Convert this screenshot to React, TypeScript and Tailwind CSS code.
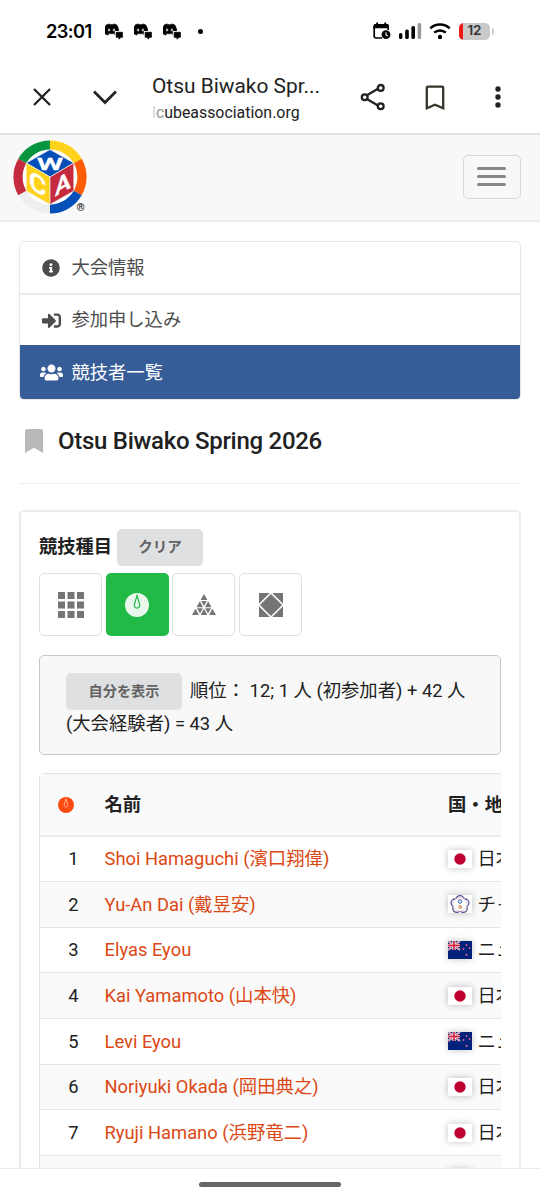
import React from "react";
import { FaBookmark, FaDiscord, FaInfoCircle, FaSignInAlt, FaUsers } from "react-icons/fa";

type FlagCode = "jp" | "tw" | "nz";

interface Competitor {
    rank: number;
    name: string;
    flag: FlagCode;
    country: string;
}

const competitors: Competitor[] = [
    { rank: 1, name: "Shoi Hamaguchi (濱口翔偉)", flag: "jp", country: "日本" },
    { rank: 2, name: "Yu-An Dai (戴昱安)", flag: "tw", country: "チャイニーズタイペイ" },
    { rank: 3, name: "Elyas Eyou", flag: "nz", country: "ニュージーランド" },
    { rank: 4, name: "Kai Yamamoto (山本快)", flag: "jp", country: "日本" },
    { rank: 5, name: "Levi Eyou", flag: "nz", country: "ニュージーランド" },
    { rank: 6, name: "Noriyuki Okada (岡田典之)", flag: "jp", country: "日本" },
    { rank: 7, name: "Ryuji Hamano (浜野竜二)", flag: "jp", country: "日本" },
    { rank: 8, name: "", flag: "jp", country: "" },
];

// ==========================================
// STATUS BAR
// ==========================================
function DiscordNotification() {
    return (
        <svg width="19" height="17" viewBox="0 0 19 17">
            <FaDiscord x="-1.5" y="-1.5" width="20" height="18" stroke="#000" strokeWidth="24" />
            <path d="M9.8 8h9.2v9H9.8z" fill="#fff" />
            <path d="M11.2 9.3h6.2v5h-1.6L14 16.2v-1.9h-2.8z" fill="#000" stroke="#000" strokeWidth="0.8" strokeLinejoin="round" />
        </svg>
    );
}

function StatusBar() {
    return (
        <div className="flex h-[62px] shrink-0 items-center pl-[46px] pr-[46.5px] text-black">
            <span className="w-[59px] font-['Inter'] text-[18.3px] font-semibold leading-none tracking-[-0.6px]">23:01</span>
            <div className="flex gap-[10px]">
                <DiscordNotification />
                <DiscordNotification />
                <DiscordNotification />
            </div>
            <div className="ml-[16px] size-[5px] rounded-full bg-black" />
            <div className="ml-auto flex items-center">
                <svg width="18" height="18" viewBox="0 0 18 18">
                    <path d="M9 16H3a1.8 1.8 0 0 1-1.8-1.8V4.2" fill="none" stroke="#000" strokeWidth="1.7" />
                    <path d="M15.2 4v4" stroke="#000" strokeWidth="1.7" />
                    <path d="M.4 6.3V3.5Q.4 2 2 2h1.2V.6h1.9V2h6.2V.6h1.9V2h1.2Q16 2 16 3.5v2.8z" />
                    <circle cx="13" cy="12.7" r="4.4" />
                    <path d="M13 10.3v2.6l1.8 1.1" fill="none" stroke="#fff" strokeWidth="1.1" />
                </svg>
                <svg className="ml-[7px]" width="24" height="18" viewBox="0 0 24 18">
                    <rect x="1" y="11" width="3.4" height="6" rx="1.6" />
                    <rect x="7.2" y="7.5" width="3.6" height="9.5" rx="1.6" />
                    <rect x="13.4" y="4" width="3.6" height="13" rx="1.6" />
                    <rect x="19.6" y="1" width="3.6" height="16" rx="1.6" fill="#999" />
                </svg>
                <svg className="ml-[7px]" width="22" height="18" viewBox="0 0 22 18">
                    <path d="M1.3 6.3a14.3 14.3 0 0 1 19.4 0M5.2 10.7a8.6 8.6 0 0 1 11.6 0" fill="none" stroke="#000" strokeWidth="2.5" />
                    <circle cx="11" cy="15" r="2.2" />
                </svg>
                <div className="ml-[8px] flex h-[17px] w-[31px] items-center overflow-hidden rounded-[5px] bg-[#c9c9c9]">
                    <div className="h-full w-[4px] bg-[#f01a14]" />
                    <span className="ml-[4.5px] font-['Inter'] text-[13.5px] font-semibold leading-none tracking-[-0.3px] text-[#333]">12</span>
                </div>
                <div className="ml-[1.5px] h-[7px] w-[2px] rounded-r bg-[#ccc]" />
            </div>
        </div>
    );
}

// ==========================================
// BROWSER BAR
// ==========================================
function BrowserBar() {
    return (
        <div className="flex h-[73px] shrink-0 items-center border-b-2 border-[#dfe0e8] pl-[30px] text-[#222]">
            <svg className="-mt-px" width="24" height="24" viewBox="0 0 24 24" fill="none" stroke="currentColor" strokeWidth="2.3">
                <path d="M4 4l16 16M20 4L4 20" />
            </svg>
            <svg className="-mt-px ml-[39px]" width="24" height="24" viewBox="0 0 24 24" fill="none" stroke="currentColor" strokeWidth="2.7">
                <path d="M1 6.5l11 11 11-11" />
            </svg>
            <div className="ml-[35px] mt-[3px] w-[208px]">
                <div className="text-[20.9px] leading-[26px]">Otsu Biwako Spr...</div>
                <div className="text-[15.9px] leading-[27px]">
                    <span className="text-[#d4d4d4]">l</span>
                    <span className="text-[#999]">c</span>ubeassociation.org
                </div>
            </div>
            <svg className="-mt-px" width="26" height="28" viewBox="0 0 26 28" fill="none" stroke="currentColor" strokeWidth="2.3">
                <path d="M6.5 12.5l11-6.5M6.5 15.7l11 6.5" />
                <circle cx="4.7" cy="14.2" r="2.9" />
                <circle cx="20.7" cy="4.9" r="2.9" />
                <circle cx="20.7" cy="23.3" r="2.9" />
            </svg>
            <svg className="ml-[39px]" width="20" height="26" viewBox="0 0 20 26" fill="none" stroke="#38342c" strokeWidth="2.3">
                <path d="M1.8 23.3V2.7q0-1 1-1h14.4q1 0 1 1v20.6L10 19.8z" />
            </svg>
            <svg className="-mt-px ml-[49px]" width="8" height="24" viewBox="0 0 8 24" fill="currentColor">
                <circle cx="4" cy="4" r="2.7" />
                <circle cx="4" cy="12" r="2.7" />
                <circle cx="4" cy="20" r="2.7" />
            </svg>
        </div>
    );
}

// ==========================================
// SITE HEADER
// ==========================================
function WcaLogo() {
    return (
        <svg className="-mt-[2px]" width="76" height="76" viewBox="-38 -38 76 76" fontFamily="Roboto, sans-serif" fontWeight="500" fill="#fff">
            <circle r="29" />
            <g fill="none" strokeWidth="9.2">
                <path d="M-27.7-16A32 32 0 0 1 0-32" stroke="#07963f" />
                <path d="M0-32A32 32 0 0 1 27.7-16" stroke="#ffd21c" />
                <path d="M27.7-16A32 32 0 0 1 27.7 16" stroke="#ff5c08" />
                <path d="M27.7 16A32 32 0 0 1 0 32" stroke="#0450b8" />
                <path d="M0 32A32 32 0 0 1-27.7 16" stroke="#eee" />
                <path d="M-27.7 16A32 32 0 0 1-27.7-16" stroke="#c62a3e" />
            </g>
            <g stroke="#f4f1e8" strokeWidth="0.7">
                <path d="M0-27.5L23.8-14 0 0-23.8-14z" fill="#0450b8" />
                <path d="M-23.8-14L0 0v27.5L-23.8 14z" fill="#ffd21c" />
                <path d="M23.8-14L0 0v27.5L23.8 14z" fill="#c62a3e" />
            </g>
            <g stroke="#fff" strokeWidth="0.5">
                <text x="0" y="-7" textAnchor="middle" fontSize="17" textLength="26" lengthAdjust="spacingAndGlyphs">W</text>
                <text transform="matrix(.87 .5 0 1 -12.4 6.5)" x="0" y="9" textAnchor="middle" fontSize="25" textLength="20" lengthAdjust="spacingAndGlyphs">C</text>
                <text transform="matrix(.87 -.5 0 1 12.8 6.5)" x="0" y="8.5" textAnchor="middle" fontSize="24" textLength="18" lengthAdjust="spacingAndGlyphs">A</text>
            </g>
            <text x="30.5" y="34" textAnchor="middle" fontSize="10.5" fontWeight="700" fill="#111">®</text>
        </svg>
    );
}

function SiteHeader() {
    return (
        <header className="flex h-[87px] shrink-0 items-center justify-between border-b-2 border-[#ebebeb] bg-[#f8f8f8] pl-[11.5px] pr-[19.5px]">
            <WcaLogo />
            <button className="-mt-[2px] flex h-[44px] w-[58px] flex-col items-center justify-center gap-[5.5px] rounded-[5px] border border-[#d8d8d8]">
                <span className="h-[2.4px] w-[29px] rounded-sm bg-[#888]" />
                <span className="h-[2.4px] w-[29px] rounded-sm bg-[#888]" />
                <span className="h-[2.4px] w-[29px] rounded-sm bg-[#888]" />
            </button>
        </header>
    );
}

// ==========================================
// COMPETITION MENU
// ==========================================
function CompetitionMenu() {
    return (
        <nav className="mt-[19px] overflow-hidden rounded-[5px] border-[1.5px] border-[#e8e8e8] text-[18.3px] text-[#4d4d4d]">
            <a className="flex h-[53px] items-center border-b-2 border-[#ebebeb] pt-px">
                <span className="flex w-[51.5px] justify-center pl-[11px]"><FaInfoCircle size={18} /></span>
                大会情報
            </a>
            <a className="flex h-[50px] items-center">
                <span className="flex w-[51.5px] justify-center pl-[11px]"><FaSignInAlt size={19} /></span>
                参加申し込み
            </a>
            <a className="-mx-px -mb-px flex h-[55px] items-center bg-[#375d98] pl-px text-white">
                <span className="flex w-[51.5px] justify-center pl-[11px]"><FaUsers size={23} /></span>
                競技者一覧
            </a>
        </nav>
    );
}

// ==========================================
// EVENT ICONS
// ==========================================
function CubeIcon() {
    return (
        <svg width="26" height="26" viewBox="0 0 26 26" fill="#757575">
            {[0, 9.5, 19].map((y) => [0, 9.5, 19].map((x) => <rect key={`${x}-${y}`} x={x} y={y} width="7" height="7" />))}
        </svg>
    );
}

function ClockIcon({ size, face, hand }: { size: number; face: string; hand: string }) {
    return (
        <svg width={size} height={size} viewBox="0 0 24 24">
            <circle cx="12" cy="12" r="12" fill={face} />
            <path d="M12 2.5l2.6 8.7a2.8 2.8 0 1 1-5.2 0z" fill="none" stroke={hand} strokeWidth="1.2" />
        </svg>
    );
}

function PyraminxIcon() {
    return (
        <svg width="24" height="21" viewBox="0 0 24 21" fill="#757575">
            <path d="M12 0l3.4 6H8.6z" />
            <path d="M7.8 7.3l3.3 6H4.5zM16.2 7.3l3.3 6h-6.6zM9.2 6.9h5.6L12 12z" />
            <path d="M3.6 14.8L7 20.9H0zM12 14.8l3.4 6.1H8.6zM20.4 14.8l3.6 6.1h-7zM5 14.3h5.9L8 19.6zM13.1 14.3H19l-3 5.3z" />
        </svg>
    );
}

function SquareIcon() {
    return (
        <svg width="24" height="24" viewBox="0 0 24 24" fill="#757575">
            <path d="M12 .9L23.1 12 12 23.1.9 12z" />
            <path d="M0 0h10.8L0 10.8zM24 0v10.8L13.2 0zM0 24V13.2L10.8 24zM24 24H13.2L24 13.2z" />
        </svg>
    );
}

function EventSelector() {
    const box = "flex size-[63px] items-center justify-center rounded-[5px] border-[1.5px] border-[#e0e0e0]";

    return (
        <div>
            <div className="flex h-[37px] items-center">
                <span className="mb-[2px] text-[18.25px] font-bold">競技種目</span>
                <button className="ml-[5px] h-[37px] w-[86px] rounded-[5px] bg-[#dfe0e2] text-[14.5px] font-bold text-[#636363]">クリア</button>
            </div>
            <div className="mt-[7px] flex gap-[3.7px]">
                <div className={box}><CubeIcon /></div>
                <div className="flex size-[63px] items-center justify-center rounded-[5px] bg-[#22ba46]">
                    <ClockIcon size={24} face="#e9f8ec" hand="#22ba46" />
                </div>
                <div className={box}><PyraminxIcon /></div>
                <div className={box}><SquareIcon /></div>
            </div>
        </div>
    );
}

// ==========================================
// FLAGS
// ==========================================
function Flag({ code }: { code: FlagCode }) {
    return (
        <svg className="shrink-0 shadow-[0_0_7px_rgba(0,0,0,0.25)]" width="24" height="18" viewBox="0 0 24 18">
            <rect width="24" height="18" fill={code === "nz" ? "#01217a" : "#fff"} />
            {code === "jp" && <circle cx="12" cy="9" r="5.7" fill="#bd0030" />}
            {code === "tw" && (
                <>
                    <g fill="#fff" stroke="#4d5596" strokeWidth="1.3">
                        <circle cx="12" cy="4.5" r="3.9" />
                        <circle cx="17" cy="7.9" r="3.9" />
                        <circle cx="15.3" cy="13.5" r="3.9" />
                        <circle cx="8.7" cy="13.5" r="3.9" />
                        <circle cx="7" cy="7.9" r="3.9" />
                    </g>
                    <circle cx="12" cy="9.4" r="6.9" fill="#fff" />
                    <circle cx="12" cy="9.4" r="7" fill="none" stroke="#e8aab8" strokeWidth="0.6" />
                    <circle cx="12" cy="6.5" r="1.8" fill="#dce9fa" stroke="#4668ae" />
                    <circle cx="12" cy="12" r="1.5" fill="none" stroke="#d9a05c" />
                    <path d="M12.2 10.8l1 2" stroke="#c34468" strokeWidth="0.8" />
                </>
            )}
            {code === "nz" && (
                <>
                    <path d="M0 0l12 9M12 0L0 9" stroke="#fff" strokeWidth="2" />
                    <path d="M0 0l12 9M12 0L0 9" stroke="#cf2845" strokeWidth="0.8" />
                    <path d="M6 0v9M0 4.5h12" stroke="#fff" strokeWidth="3.2" />
                    <path d="M6 0v9M0 4.5h12" stroke="#cf2845" strokeWidth="1.8" />
                    <g fill="#d06a8e">
                        <circle cx="18.5" cy="4" r="0.9" />
                        <circle cx="15.5" cy="8" r="0.9" />
                        <circle cx="21.5" cy="7" r="0.9" />
                        <circle cx="18.5" cy="13.8" r="1.1" />
                    </g>
                </>
            )}
        </svg>
    );
}

// ==========================================
// COMPETITORS TABLE
// ==========================================
function CompetitorsTable() {
    return (
        <div className="mt-[18px] overflow-hidden">
            <div className="w-[640px] rounded-[5px] border-[1.5px] border-[#e2e2e4] text-[18.35px]">
                <div className="flex h-[62.5px] items-center border-b-2 border-[#ececee] bg-[#f9fafb] pt-px font-bold">
                    <div className="w-[64.5px] pl-[17.5px]"><ClockIcon size={16} face="#fb4a12" hand="#ffc3ac" /></div>
                    <div className="w-[343.5px]">名前</div>
                    <div>国・地域</div>
                </div>
                {competitors.map((c) => (
                    <div key={c.rank} className="flex h-[45.65px] items-center border-b-[1.5px] border-[#e6e6e6] even:bg-white odd:bg-[#fafafa]">
                        <div className="w-[38.5px] text-right">{c.rank}</div>
                        <div className="ml-[26px] w-[343px] text-[#dc4814]">{c.name}</div>
                        <Flag code={c.flag} />
                        <div className="ml-[6px] whitespace-nowrap">{c.country}</div>
                    </div>
                ))}
            </div>
        </div>
    );
}

// ==========================================
// MAIN
// ==========================================
export default function App() {
    return (
        <div
            lang="ja"
            className="flex h-[1200px] w-[540px] flex-col overflow-hidden bg-white font-['Roboto','Noto_Sans_CJK_JP',sans-serif] text-[#212121]"
        >
            <StatusBar />
            <BrowserBar />
            <div className="flex min-h-0 flex-1 flex-col overflow-hidden">
                <SiteHeader />
                <main className="pl-[19px] pr-[19.5px]">
                    <CompetitionMenu />

                    <div className="flex h-[84px] items-center border-b-[1.5px] border-[#eee] pb-[2px]">
                        <FaBookmark className="ml-[2.5px] text-[#b9b9b9]" size={24} />
                        <h1 className="ml-[12.5px] text-[24px] font-medium tracking-[-0.28px]">Otsu Biwako Spring 2026</h1>
                    </div>

                    <section className="mt-[26px] h-[800px] rounded-[5px] border-2 border-[#ebebeb] px-[18px] pt-[17px]">
                        <EventSelector />

                        {/* Own ranking and totals */}
                        <div className="mt-[18.5px] h-[100.5px] rounded-[5px] border-[1.5px] border-[#c8c8c8] bg-[#f8f8f9] pl-[26px] pt-[17px] text-[18.35px] leading-[32px]">
                            <div className="flex h-[37px] items-center">
                                <button className="h-[37px] w-[116px] rounded-[5px] bg-[#dfe0e2] text-[14.2px] font-bold leading-none text-[#636363]">自分を表示</button>
                                <span className="-mt-px ml-[8px] whitespace-nowrap">順位： 12; 1 人 (初参加者) + 42 人</span>
                            </div>
                            <div className="-mt-[2px]">(大会経験者) = 43 人</div>
                        </div>

                        <CompetitorsTable />
                    </section>
                </main>
            </div>
            <footer className="flex h-[32px] shrink-0 items-center justify-center border-t border-[#ebebeb] bg-white">
                <div className="h-[5px] w-[142px] rounded-full bg-[#666]" />
            </footer>
        </div>
    );
}
